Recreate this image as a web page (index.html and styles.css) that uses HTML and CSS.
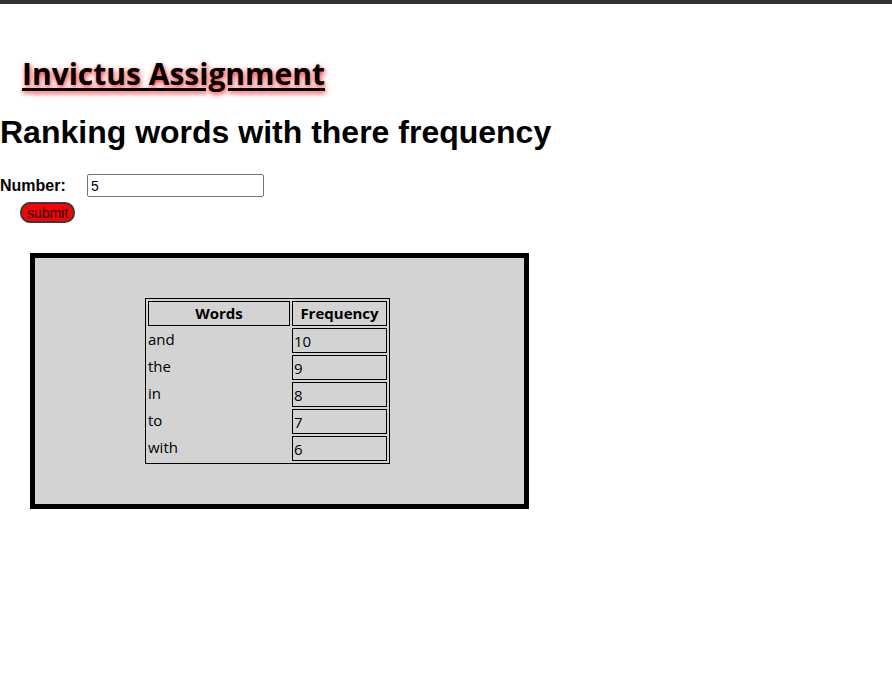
FILE: index.html
```html
<!DOCTYPE html>
<html lang="en">
<head>
<meta charset="utf-8">
<title>Invictus Assignment</title>
<link rel="stylesheet" href="styles.css">
</head>
<body>
<div class="topbar"></div>
<div class="title">Invictus Assignment</div>
<h1 class="heading">Ranking words with there frequency</h1>
<form class="form">
  <div class="row">
    <label class="label" for="num">Number:</label>
    <input class="input" id="num" type="text" value="5">
  </div>
  <button class="submit" type="button">submit</button>
</form>
<div class="box">
  <table class="table">
    <tr>
      <th class="th th-words">Words</th>
      <th class="th th-freq">Frequency</th>
    </tr>
    <tr><td class="word">and</td><td class="freq">10</td></tr>
    <tr><td class="word">the</td><td class="freq">9</td></tr>
    <tr><td class="word">in</td><td class="freq">8</td></tr>
    <tr><td class="word">to</td><td class="freq">7</td></tr>
    <tr><td class="word">with</td><td class="freq">6</td></tr>
  </table>
</div>
</body>
</html>
```
FILE: styles.css
```css
html, body {
  margin: 0;
  padding: 0;
  background: #fff;
  color: #000;
}
body {
  font-family: "Liberation Sans", Arial, sans-serif;
}
.topbar {
  height: 4px;
  background: #333;
}
.title {
  margin: 49px 0 0 22px;
  font-family: "Open Sans", sans-serif;
  font-weight: 700;
  font-size: 30px;
  line-height: 41px;
  text-decoration: underline;
  text-decoration-thickness: 3px;
  text-underline-offset: 3px;
  text-shadow: 1px 2px 5px #ff1a1a;
  display: inline-block;
}
.heading {
  margin: 20px 0 0 0;
  font-family: "Liberation Sans", Arial, sans-serif;
  font-weight: 700;
  font-size: 32px;
  line-height: 36px;
}
.form {
  margin: 24px 0 0 0;
}
.row {
  display: flex;
  align-items: center;
  height: 23px;
}
.label {
  font-weight: 700;
  font-size: 16px;
  line-height: 18px;
  width: 87px;
}
.input {
  box-sizing: border-box;
  width: 177px;
  height: 23px;
  margin: 0;
  border: 1px solid #767676;
  border-radius: 2px;
  padding: 1px 3px;
  font-family: "Liberation Sans", Arial, sans-serif;
  font-size: 14px;
  color: #000;
  background: #fff;
}
.submit {
  display: block;
  box-sizing: border-box;
  margin: 5px 0 0 20px;
  width: 55px;
  height: 21px;
  padding: 0;
  background: #ff0000;
  border: 2px solid #3a3a3a;
  border-radius: 10px;
  font-family: "Liberation Sans", Arial, sans-serif;
  font-size: 14px;
  line-height: 16px;
  color: #000;
}
.box {
  box-sizing: border-box;
  margin: 30px 0 0 30px;
  width: 499px;
  height: 256px;
  border: 5px solid #000;
  background: #d3d3d3;
  padding: 40px 0 0 110px;
}
.table {
  border: 1px solid #000;
  border-spacing: 2px;
  font-family: "Open Sans", sans-serif;
  font-size: 15px;
}
.th {
  border: 1px solid #000;
  padding: 1px;
  line-height: 21px;
  font-weight: 700;
  text-align: center;
}
.th-words {
  width: 138px;
}
.th-freq {
  width: 91px;
}
.word {
  padding: 0;
  vertical-align: top;
  line-height: 22px;
}
.freq {
  border: 1px solid #000;
  padding: 2px 1px 0 1px;
  line-height: 21px;
  vertical-align: middle;
}
```
